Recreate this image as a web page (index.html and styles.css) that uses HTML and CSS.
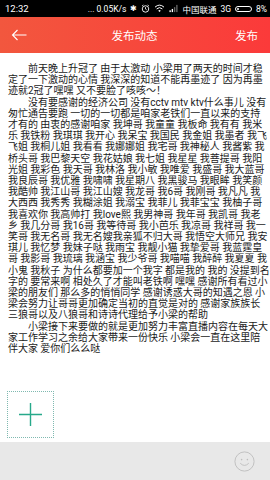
FILE: index.html
```html
<!DOCTYPE html>
<html lang="zh">
<head>
<meta charset="utf-8">
<link rel="stylesheet" href="styles.css">
</head>
<body>
<div class="app">
  <div class="status">
    <span class="time">12:32</span>
    <span class="right">
      <span>... 0.05K/s</span>
      <span class="glyph">✱</span>
      <svg class="ico" width="9" height="9" viewBox="0 0 10 10"><circle cx="5" cy="5.5" r="3.6" fill="none" stroke="#fff" stroke-width="1"/><path d="M5 3.5V5.6L6.3 6.4" fill="none" stroke="#fff" stroke-width="0.9"/><path d="M1.2 2.2L2.6 1M8.8 2.2L7.4 1" stroke="#fff" stroke-width="0.9"/></svg>
      <svg class="ico" width="11" height="9" viewBox="0 0 12 10"><path d="M1 3.5Q6 -1 11 3.5" fill="none" stroke="#fff" stroke-width="1.1"/><path d="M2.8 5.5Q6 2.5 9.2 5.5" fill="none" stroke="#fff" stroke-width="1.1"/><path d="M4.6 7.4Q6 6.2 7.4 7.4L6 9Z" fill="#fff"/></svg>
      <svg class="ico" width="9" height="9" viewBox="0 0 10 10"><rect x="0.5" y="7" width="1.5" height="2" fill="#fff"/><rect x="3" y="5.5" width="1.5" height="3.5" fill="#fff"/><rect x="5.5" y="3.5" width="1.5" height="5.5" fill="#666"/><rect x="8" y="1" width="1.5" height="8" fill="#666"/></svg>
      <span>中国联通</span>
      <span>3G</span>
      <span class="battery"><span class="level"></span></span>
      <span>8%</span>
    </span>
  </div>
  <div class="header">
    <svg class="back" width="16" height="12" viewBox="0 0 16 12"><path d="M15.5 6H1.5M6.5 1L1.5 6L6.5 11" fill="none" stroke="#fff" stroke-width="1.1"/></svg>
    <span class="title">发布动态</span>
    <span class="publish">发布</span>
  </div>
  <div class="main">
    <div class="post">
      <p class="para">前天晚上升冠了 由于太激动 小梁用了两天的时间才稳定了一下激动的心情 我深深的知道不能再墨迹了 因为再墨迹就2冠了嘿嘿 又不要脸了咳咳～！</p>
      <p class="para">没有要感谢的经济公司 没有cctv mtv ktv什么事儿 没有匆忙通告要跑 一切的一切都是咱家老铁们一直以来的支持才有的 由衷的感谢咱家 我坤哥 我童童 我板命 我有有 我米乐 我铁粉 我琪琪 我开心 我呆宝 我国民 我金姐 我墨者 我飞飞姐 我桐儿姐 我看看 我娜娜姐 我宅哥 我神秘人 我酱紫 我桥头哥 我巴黎天空 我花姑娘 我七姐 我星星 我菩提哥 我阳光姐 我彩色 我天哥 我林洛 我小敏 我唯爱 我盛哥 我大蓝哥 我良辰哥 我优雅 我啸啸 我星期八 我黑骏马 我眼眸 我笑颜 我酷帅 我江山哥 我江山嫂 我龙哥 我6哥 我刚哥 我凡凡 我大西西 我秀秀 我糊涂姐 我溺宝 我菲儿 我菲宝宝 我柚子哥 我喜欢你 我高帅打 我love熙 我男神哥 我年哥 我凯哥 我老乡 我几分哥 我16哥 我等待哥 我小芭乐 我凉哥 我祥哥 我一笑哥 我无名哥 我无名嫂我亲狐不归大哥 我悟空大师兄 我安琪儿 我忆梦 我妹子哒 我雨宝 我靓小猫 我挚爱哥 我蓝霆皇哥 我影哥 我琉璃 我涵宝 我少爷哥 我喵喵 我醉醉 我夏夏 我小鬼 我秋子 为什么都要加一个我字 都是我的 我的 没提到名字的 要常来啊 相处久了才能叫老铁啊 嘿嘿 感谢所有看过小梁的朋友们 那么多的悄悄同学 感谢诱惑大哥的知遇之恩 小梁会努力让哥哥更加确定当初的直觉是对的 感谢家族族长三狼哥以及八狼哥和诗诗代理给予小梁的帮助</p>
      <p class="para">小梁接下来要做的就是更加努力丰富直播内容在每天大家工作学习之余给大家带来一份快乐 小梁会一直在这里陪伴大家 爱你们么么哒</p>
    </div>
    <div class="add">
      <svg width="25" height="25" viewBox="0 0 25 25"><path d="M12.5 1V24M1 12.5H24" stroke="#27a98a" stroke-width="1.4"/></svg>
    </div>
  </div>
  <div class="toolbar">
    <svg class="smile" width="21" height="21" viewBox="0 0 21 21"><circle cx="10.5" cy="10.5" r="9.6" fill="none" stroke="#bdbdbd" stroke-width="0.9"/><circle cx="7.6" cy="8.6" r="0.8" fill="#bdbdbd"/><circle cx="13.4" cy="8.6" r="0.8" fill="#bdbdbd"/><path d="M6.2 12.2Q10.5 16.6 14.8 12.2" fill="none" stroke="#bdbdbd" stroke-width="0.9"/></svg>
  </div>
</div>
</body>
</html>
```

FILE: styles.css
```css
html, body {
  margin: 0;
  padding: 0;
  background: #fff;
}
body {
  font-family: "Noto Sans CJK SC", "Noto Sans", sans-serif;
}
.app {
  width: 270px;
  height: 480px;
  display: flex;
  flex-direction: column;
  overflow: hidden;
}
.status {
  height: 17px;
  flex: none;
  background: #000;
  color: #fff;
  font-family: "Roboto", "Noto Sans CJK SC", sans-serif;
  font-size: 8.5px;
  display: flex;
  align-items: center;
  justify-content: space-between;
  padding: 0 3px 0 5px;
}
.status .time {
  font-size: 9.5px;
}
.status .right {
  display: flex;
  align-items: center;
  gap: 4px;
}
.status .glyph {
  font-size: 8px;
}
.ico {
  display: block;
}
.battery {
  width: 17px;
  height: 6px;
  border: 1px solid #fff;
  border-radius: 3px;
  display: flex;
  padding: 1px;
  box-sizing: border-box;
}
.battery .level {
  width: 2px;
  background: #fff;
  border-radius: 1px;
}
.header {
  height: 36px;
  flex: none;
  background: linear-gradient(90deg, #f2573e, #fb3a3a);
  display: flex;
  align-items: center;
  justify-content: space-between;
  padding: 0 12px 0 11px;
  color: #fff;
}
.back {
  display: block;
  width: 16px;
}
.title {
  font-size: 11.5px;
  margin-left: 7px;
}
.publish {
  font-size: 11.5px;
}
.main {
  flex: 1;
  display: flex;
  flex-direction: column;
  padding: 10px 0 0 8px;
}
.post {
  color: #1a1a1a;
  font-family: "Roboto", "Noto Sans CJK SC", sans-serif;
  font-size: 10px;
  line-height: 11.2px;
  word-spacing: -0.106px;
}
.para {
  margin: 0;
  text-indent: 2em;
}
.add {
  margin-top: 37px;
  margin-left: -1px;
  width: 47px;
  height: 47px;
  box-sizing: border-box;
  border: 1px dotted #7fb9b0;
  display: flex;
  align-items: center;
  justify-content: center;
}
.add svg {
  display: block;
}
.toolbar {
  height: 38px;
  flex: none;
  background: #e8e8e8;
  display: flex;
  align-items: center;
  justify-content: flex-end;
  padding-right: 15px;
}
.smile {
  display: block;
}
```
